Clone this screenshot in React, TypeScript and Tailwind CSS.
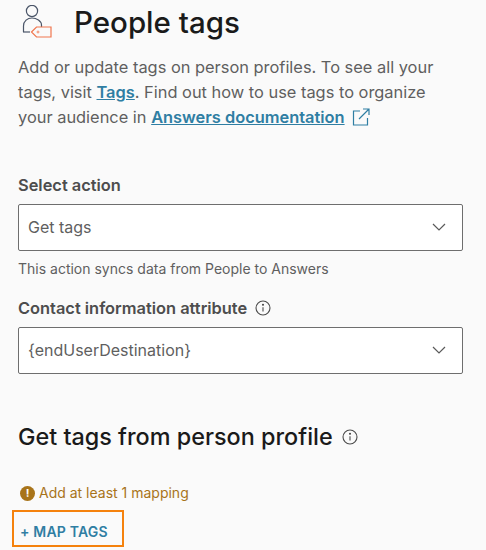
const InfoIcon = ({ size = 16 }: { size?: number }) => (
  <svg width={size} height={size} viewBox="0 0 16 16" fill="none" stroke="#4b4b4b" strokeWidth="1.1">
    <circle cx="8" cy="8" r="7" />
    <path d="M8 7.2v4.3" />
    <circle cx="8" cy="4.8" r="0.5" fill="#4b4b4b" />
  </svg>
);

const Chevron = () => (
  <svg width="14" height="8" viewBox="0 0 14 8" fill="none" stroke="#5a5a5a" strokeWidth="1.2">
    <path d="M1 1l6 6 6-6" />
  </svg>
);

const Select = ({ value }: { value: string }) => (
  <div className="flex h-[47px] items-center justify-between rounded-[2px] border border-[#6e6e6e] bg-white pb-[2px] pl-[9px] pr-[16px] text-[16px] text-[#5f5f5f]">
    <span>{value}</span>
    <Chevron />
  </div>
);

export default function App() {
  return (
    <div className="h-[550px] w-[486px] overflow-hidden bg-[#fafafa] font-['Inter',sans-serif]">
      {/* Header */}
      <div className="flex h-[46px] items-start pl-[22px]">
        <svg width="30" height="38" viewBox="0 0 30 38" fill="none" className="mt-[5px]">
          <circle cx="10" cy="6" r="5.6" stroke="#4a5568" strokeWidth="1.2" />
          <path d="M1.5 27v-6c0-5 4-8 8.500-8s9.500 3 9.500 7v2" stroke="#4a5568" strokeWidth="1.2" />
          <path d="M1 27h7" stroke="#4a5568" strokeWidth="1.2" />
          <path d="M9.500 27l5-5h14.500v10H14.500z" stroke="#f0764e" strokeWidth="1.200" fill="#fafafa" />
          <circle cx="16" cy="27" r="1" stroke="#f0764e" strokeWidth="0.8" />
        </svg>
        <h1 className="ml-[22px] mt-[3px] text-[29.5px] font-medium leading-[38px] text-[#1a1a1a]">People tags</h1>
      </div>

      <div className="pl-[18px] pr-[23px]">
        <p className="mt-[9px] text-[16.4px] leading-[25px] text-[#5f5f5f]">
          Add or update tags on person profiles. To see all your tags, visit{" "}
          <a className="font-semibold text-[#2f7ea3] underline">Tags</a>. Find out how to use tags to organize your audience in{" "}
          <a className="font-semibold text-[#2f7ea3] underline">Answers documentation</a>
          <svg width="18" height="18" viewBox="0 0 18 18" fill="none" stroke="#2f7ea3" strokeWidth="1.2" className="ml-[7px] inline-block align-[-3px]">
            <path d="M8 3H1.500v14h14v-7" />
            <path d="M7 11L17 1M11 1h6v6" />
          </svg>
        </p>

        <label className="mt-[45px] block text-[16.4px] font-semibold leading-[20px] text-[#4d4d4d]">Select action</label>
        <div className="mt-[9px]">
          <Select value="Get tags" />
        </div>
        <p className="mt-[9px] text-[14px] leading-[18px] text-[#5f5f5f]">This action syncs data from People to Answers</p>

        <div className="mt-[20px] flex items-center gap-[8px]">
          <label className="text-[16.4px] font-semibold leading-[20px] text-[#4d4d4d]">Contact information attribute</label>
          <InfoIcon />
        </div>
        <div className="mt-[9px]">
          <Select value="{endUserDestination}" />
        </div>

        <div className="mt-[48px] flex items-center gap-[9px]">
          <h2 className="whitespace-nowrap text-[23.4px] font-medium leading-[30px] text-[#1a1a1a]">Get tags from person profile</h2>
          <InfoIcon />
        </div>

        <div className="mt-[32px] flex items-center gap-[4px] pl-[2px] text-[14px] leading-[18px] text-[#a8741a]">
          <span className="flex h-[15px] w-[15px] items-center justify-center rounded-full bg-[#a8741a] text-[11px] font-bold text-white">!</span>
          Add at least 1 mapping
        </div>
      </div>

      <button className="ml-[12px] mt-[8px] flex h-[37px] w-[112px] items-center border-2 border-[#f5820d] pl-[6px] pt-[6px] text-[14px] font-semibold tracking-[0.2px] text-[#2f7ea3]">
        + MAP TAGS
      </button>
    </div>
  );
}
